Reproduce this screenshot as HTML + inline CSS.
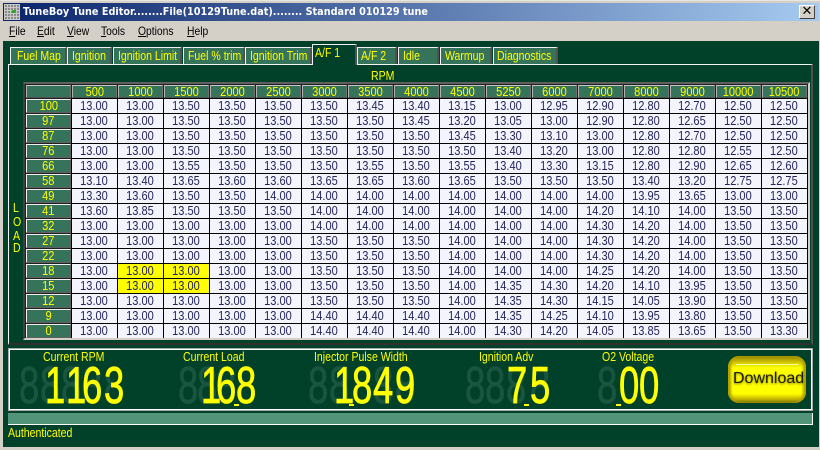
<!DOCTYPE html>
<html><head><meta charset="utf-8"><title>TuneBoy Tune Editor</title>
<style>
*{margin:0;padding:0;box-sizing:border-box}
html,body{width:820px;height:450px;overflow:hidden;background:#d4d0c8;font-family:"Liberation Sans",sans-serif}
#w{position:absolute;left:0;top:0;width:820px;height:450px;overflow:hidden;background:#d4d0c8;border-top:1px solid #e8e6e0;border-left:1px solid #d4d0c8}
.t{position:absolute;white-space:nowrap;font-size:13px;line-height:15px;color:#ff0;transform:scaleX(.81);transform-origin:0 0}
#title{position:absolute;left:3px;top:3px;width:816px;height:18px;background:linear-gradient(90deg,#0a246a,#a6caf0)}
#tt{position:absolute;left:23px;top:3px;height:18px;color:#fff;font:bold 11px/18px "DejaVu Sans",sans-serif;white-space:nowrap;transform:scaleX(.88);transform-origin:0 0}
#ico{position:absolute;left:4px;top:4px;width:16px;height:16px;background:#8a8a8a;background-image:repeating-linear-gradient(90deg,#c8c8c8 0 1px,transparent 1px 3px),repeating-linear-gradient(0deg,#c8c8c8 0 1px,transparent 1px 3px)}
#ico:after{content:"";position:absolute;left:8px;top:6px;width:4px;height:3px;background:#2fa82f}
#cl{position:absolute;left:799px;top:5px;width:16px;height:14px;background:#d4d0c8;border:1px solid;border-color:#fff #404040 #404040 #fff;font:bold 13px/12px "DejaVu Sans",sans-serif;color:#000;text-align:center}
.m{position:absolute;top:24px;font-size:12px;line-height:15px;color:#000;transform:scaleX(.86);transform-origin:0 0;white-space:nowrap}
#cli{position:absolute;left:3px;top:41px;width:816px;height:406px;background:#01412a}
.tab{position:absolute;top:47px;height:17px;background:#35745a;border-top:1px solid #f0f0f0;border-left:1px solid #f0f0f0;border-right:2px solid #505050}
#page{position:absolute;left:8px;top:64px;width:805px;height:281px;border-top:1px solid #f4f4f4;border-left:1px solid #f4f4f4;border-right:2px solid #505050;border-bottom:2px solid #303030}
#gf{position:absolute;left:23px;top:82px;width:787px;height:258px;background:#202020;border-top:2px solid #606060;border-left:2px solid #404040;border-right:2px solid #d4d0c8;border-bottom:2px solid #d4d0c8}
#cells{position:absolute;left:71px;top:98px;width:737px;height:240px;background-color:#f4f4fc;background-image:repeating-linear-gradient(90deg,#000 0 1px,transparent 1px 46px),repeating-linear-gradient(180deg,#000 0 1px,transparent 1px 15px)}
.yl{position:absolute;background:#ff0}
.h,.r{position:absolute;background:#35745a;border:1px solid;color:#ff0;font-size:13px;text-align:center}
.h{top:85px;width:45px;height:13px;border-color:#c8c8c8 #707070 #505050 #b0b0b0;line-height:12px}
.r{left:26px;width:45px;height:14px;border-color:#f0f0f0 #606060 #606060 #f0f0f0;line-height:12px}
.h span,.r span{display:inline-block;transform:scaleX(.85)}
#txt{position:absolute;left:71px;top:99px;width:866px;display:grid;grid-template-columns:repeat(16,54.12px);grid-auto-rows:15px;transform:scaleX(.85);transform-origin:0 0;font-size:13px;line-height:14px;color:#24245c;text-align:center}
#txt i{font-style:normal}
#gp{position:absolute;left:8px;top:348px;width:805px;height:63px;border:1px solid #a8a8a8;box-shadow:inset 1px 1px 0 #fff,inset -1px -1px 0 #fff}
#bar{position:absolute;left:8px;top:413px;width:805px;height:12px;background:#52947a;border-right:1px solid #fff;border-bottom:1px solid #fff}
.g,.y{position:absolute;top:360px;width:29px;text-align:center;font:normal 52px/52px "Liberation Sans",sans-serif;transform:scaleX(.7);transform-origin:0 0;-webkit-text-stroke:.8px currentColor}
.g{color:#1a553f}.y{color:#ff0}
.p{position:absolute;top:404px;width:5px;height:2px;overflow:hidden;color:#ff0;background:#ff0;font-size:1px;line-height:2px}
#dl{position:absolute;left:728px;top:356px;width:78px;height:47px;border-radius:11px;background:linear-gradient(180deg,#8f7f00 0,#c4b400 10%,#ff0 25%,#ff0 80%,#c4b400 92%,#6e6200 100%);box-shadow:inset 3px 0 2px #b0a000,inset -3px 0 2px #b0a000}
#dl:before{content:"";position:absolute;left:8px;right:8px;top:8px;height:1px;background:#ffffa0}
#dl span{position:absolute;left:5px;top:13px;font-size:16px;line-height:20px;color:#1a1a00;text-shadow:0 1px 2px #7a6e00;white-space:nowrap}
</style></head><body>
<div id="w"></div>
<div id="title"></div><div id="ico"></div>
<div id="tt">TuneBoy Tune Editor........File(10129Tune.dat)........ Standard 010129 tune</div>
<div id="cl">✕</div>
<div class="m" style="left:9px"><u>F</u>ile</div>
<div class="m" style="left:37px"><u>E</u>dit</div>
<div class="m" style="left:67px"><u>V</u>iew</div>
<div class="m" style="left:101px"><u>T</u>ools</div>
<div class="m" style="left:138px"><u>O</u>ptions</div>
<div class="m" style="left:187px"><u>H</u>elp</div>
<div id="cli"></div>
<div id="page"></div>
<div class="tab" style="left:10px;width:57px"></div>
<div class="tab" style="left:67px;width:45px"></div>
<div class="tab" style="left:113px;width:69px"></div>
<div class="tab" style="left:183px;width:62px"></div>
<div class="tab" style="left:245px;width:67px"></div>
<div class="tab" style="left:312px;width:45px;top:44px;height:21px;background:#01412a"></div>
<div class="tab" style="left:357px;width:40px"></div>
<div class="tab" style="left:398px;width:41px"></div>
<div class="tab" style="left:440px;width:52px"></div>
<div class="tab" style="left:493px;width:65px"></div>
<div class="t" style="left:17px;top:48px">Fuel Map</div>
<div class="t" style="left:72px;top:48px">Ignition</div>
<div class="t" style="left:118px;top:48px">Ignition Limit</div>
<div class="t" style="left:188px;top:48px">Fuel % trim</div>
<div class="t" style="left:250px;top:48px">Ignition Trim</div>
<div class="t" style="left:315px;top:45px">A/F 1</div>
<div class="t" style="left:361px;top:48px">A/F 2</div>
<div class="t" style="left:403px;top:48px">Idle</div>
<div class="t" style="left:445px;top:48px">Warmup</div>
<div class="t" style="left:497px;top:48px">Diagnostics</div>
<div class="t" style="left:371px;top:68px">RPM</div>
<div class="t" style="left:13px;top:200px">L</div>
<div class="t" style="left:13px;top:214px">O</div>
<div class="t" style="left:13px;top:228px">A</div>
<div class="t" style="left:13px;top:240px">D</div>
<div id="gf"></div>
<div id="cells"></div>
<div class="yl" style="left:118px;top:264px;width:45px;height:14px"></div>
<div class="yl" style="left:164px;top:264px;width:45px;height:14px"></div>
<div class="yl" style="left:118px;top:279px;width:45px;height:14px"></div>
<div class="yl" style="left:164px;top:279px;width:45px;height:14px"></div>
<div class="h" style="left:26px"></div>
<div class="h" style="left:72px"><span>500</span></div>
<div class="h" style="left:118px"><span>1000</span></div>
<div class="h" style="left:164px"><span>1500</span></div>
<div class="h" style="left:210px"><span>2000</span></div>
<div class="h" style="left:256px"><span>2500</span></div>
<div class="h" style="left:302px"><span>3000</span></div>
<div class="h" style="left:348px"><span>3500</span></div>
<div class="h" style="left:394px"><span>4000</span></div>
<div class="h" style="left:440px"><span>4500</span></div>
<div class="h" style="left:486px"><span>5250</span></div>
<div class="h" style="left:532px"><span>6000</span></div>
<div class="h" style="left:578px"><span>7000</span></div>
<div class="h" style="left:624px"><span>8000</span></div>
<div class="h" style="left:670px"><span>9000</span></div>
<div class="h" style="left:716px"><span>10000</span></div>
<div class="h" style="left:762px"><span>10500</span></div>
<div class="r" style="top:99px"><span>100</span></div>
<div class="r" style="top:114px"><span>97</span></div>
<div class="r" style="top:129px"><span>87</span></div>
<div class="r" style="top:144px"><span>76</span></div>
<div class="r" style="top:159px"><span>66</span></div>
<div class="r" style="top:174px"><span>58</span></div>
<div class="r" style="top:189px"><span>49</span></div>
<div class="r" style="top:204px"><span>41</span></div>
<div class="r" style="top:219px"><span>32</span></div>
<div class="r" style="top:234px"><span>27</span></div>
<div class="r" style="top:249px"><span>22</span></div>
<div class="r" style="top:264px"><span>18</span></div>
<div class="r" style="top:279px"><span>15</span></div>
<div class="r" style="top:294px"><span>12</span></div>
<div class="r" style="top:309px"><span>9</span></div>
<div class="r" style="top:324px"><span>0</span></div>
<div id="txt">
<i>13.00</i><i>13.00</i><i>13.50</i><i>13.50</i><i>13.50</i><i>13.50</i><i>13.45</i><i>13.40</i><i>13.15</i><i>13.00</i><i>12.95</i><i>12.90</i><i>12.80</i><i>12.70</i><i>12.50</i><i>12.50</i>
<i>13.00</i><i>13.00</i><i>13.50</i><i>13.50</i><i>13.50</i><i>13.50</i><i>13.50</i><i>13.45</i><i>13.20</i><i>13.05</i><i>13.00</i><i>12.90</i><i>12.80</i><i>12.65</i><i>12.50</i><i>12.50</i>
<i>13.00</i><i>13.00</i><i>13.50</i><i>13.50</i><i>13.50</i><i>13.50</i><i>13.50</i><i>13.50</i><i>13.45</i><i>13.30</i><i>13.10</i><i>13.00</i><i>12.80</i><i>12.70</i><i>12.50</i><i>12.50</i>
<i>13.00</i><i>13.00</i><i>13.50</i><i>13.50</i><i>13.50</i><i>13.50</i><i>13.50</i><i>13.50</i><i>13.50</i><i>13.40</i><i>13.20</i><i>13.00</i><i>12.80</i><i>12.80</i><i>12.55</i><i>12.50</i>
<i>13.00</i><i>13.00</i><i>13.55</i><i>13.50</i><i>13.50</i><i>13.50</i><i>13.55</i><i>13.50</i><i>13.55</i><i>13.40</i><i>13.30</i><i>13.15</i><i>12.80</i><i>12.90</i><i>12.65</i><i>12.60</i>
<i>13.10</i><i>13.40</i><i>13.65</i><i>13.60</i><i>13.60</i><i>13.65</i><i>13.65</i><i>13.60</i><i>13.65</i><i>13.50</i><i>13.50</i><i>13.50</i><i>13.40</i><i>13.20</i><i>12.75</i><i>12.75</i>
<i>13.30</i><i>13.60</i><i>13.50</i><i>13.50</i><i>14.00</i><i>14.00</i><i>14.00</i><i>14.00</i><i>14.00</i><i>14.00</i><i>14.00</i><i>14.00</i><i>13.95</i><i>13.65</i><i>13.00</i><i>13.00</i>
<i>13.60</i><i>13.85</i><i>13.50</i><i>13.50</i><i>13.50</i><i>14.00</i><i>14.00</i><i>14.00</i><i>14.00</i><i>14.00</i><i>14.00</i><i>14.20</i><i>14.10</i><i>14.00</i><i>13.50</i><i>13.50</i>
<i>13.00</i><i>13.00</i><i>13.00</i><i>13.00</i><i>13.00</i><i>14.00</i><i>14.00</i><i>14.00</i><i>14.00</i><i>14.00</i><i>14.00</i><i>14.30</i><i>14.20</i><i>14.00</i><i>13.50</i><i>13.50</i>
<i>13.00</i><i>13.00</i><i>13.00</i><i>13.00</i><i>13.00</i><i>13.50</i><i>13.50</i><i>13.50</i><i>14.00</i><i>14.00</i><i>14.00</i><i>14.30</i><i>14.20</i><i>14.00</i><i>13.50</i><i>13.50</i>
<i>13.00</i><i>13.00</i><i>13.00</i><i>13.00</i><i>13.00</i><i>13.50</i><i>13.50</i><i>13.50</i><i>14.00</i><i>14.00</i><i>14.00</i><i>14.30</i><i>14.20</i><i>14.00</i><i>13.50</i><i>13.50</i>
<i>13.00</i><i>13.00</i><i>13.00</i><i>13.00</i><i>13.00</i><i>13.50</i><i>13.50</i><i>13.50</i><i>14.00</i><i>14.00</i><i>14.00</i><i>14.25</i><i>14.20</i><i>14.00</i><i>13.50</i><i>13.50</i>
<i>13.00</i><i>13.00</i><i>13.00</i><i>13.00</i><i>13.00</i><i>13.50</i><i>13.50</i><i>13.50</i><i>14.00</i><i>14.35</i><i>14.30</i><i>14.20</i><i>14.10</i><i>13.95</i><i>13.50</i><i>13.50</i>
<i>13.00</i><i>13.00</i><i>13.00</i><i>13.00</i><i>13.00</i><i>13.50</i><i>13.50</i><i>13.50</i><i>14.00</i><i>14.35</i><i>14.30</i><i>14.15</i><i>14.05</i><i>13.90</i><i>13.50</i><i>13.50</i>
<i>13.00</i><i>13.00</i><i>13.00</i><i>13.00</i><i>13.00</i><i>14.40</i><i>14.40</i><i>14.40</i><i>14.00</i><i>14.35</i><i>14.25</i><i>14.10</i><i>13.95</i><i>13.80</i><i>13.50</i><i>13.50</i>
<i>13.00</i><i>13.00</i><i>13.00</i><i>13.00</i><i>13.00</i><i>14.40</i><i>14.40</i><i>14.40</i><i>14.00</i><i>14.30</i><i>14.20</i><i>14.05</i><i>13.85</i><i>13.65</i><i>13.50</i><i>13.30</i>
</div>
<div id="gp"></div>
<div class="t" style="left:43px;top:349px">Current RPM</div>
<div class="t" style="left:183px;top:349px">Current Load</div>
<div class="t" style="left:314px;top:349px">Injector Pulse Width</div>
<div class="t" style="left:479px;top:349px">Ignition Adv</div>
<div class="t" style="left:602px;top:349px">O2 Voltage</div>

<b class="g" style="left:19px">8</b><b class="g" style="left:40px">8</b><b class="g" style="left:61px">8</b><b class="g" style="left:82px">8</b><b class="g" style="left:104px">8</b>
<b class="y" style="left:45px">1</b><b class="y" style="left:66px">1</b><b class="y" style="left:82px">6</b><b class="y" style="left:104px">3</b>

<b class="g" style="left:178px">8</b><b class="g" style="left:197px">8</b><b class="g" style="left:216px">8</b><b class="g" style="left:236px">8</b>
<b class="y" style="left:201px">1</b><b class="y" style="left:216px">6</b><b class="p" style="left:234px">.</b><b class="y" style="left:236px">8</b>

<b class="g" style="left:308px">8</b><b class="g" style="left:329px">8</b><b class="g" style="left:352px">8</b><b class="g" style="left:373px">8</b><b class="g" style="left:395px">8</b>
<b class="y" style="left:334px">1</b><b class="p" style="left:349px">.</b><b class="y" style="left:352px">8</b><b class="y" style="left:373px">4</b><b class="y" style="left:395px">9</b>

<b class="g" style="left:465px">8</b><b class="g" style="left:485px">8</b><b class="g" style="left:506px">8</b><b class="g" style="left:530px">8</b>
<b class="y" style="left:507px">7</b><b class="p" style="left:524px">.</b><b class="y" style="left:530px">5</b>

<b class="g" style="left:597px">8</b>
<b class="p" style="left:616px">.</b><b class="y" style="left:619px">0</b><b class="y" style="left:639px">0</b>

<div id="dl"><span>Download</span></div>
<div id="bar"></div>
<div class="t" style="left:8px;top:425px">Authenticated</div>
</body></html>
